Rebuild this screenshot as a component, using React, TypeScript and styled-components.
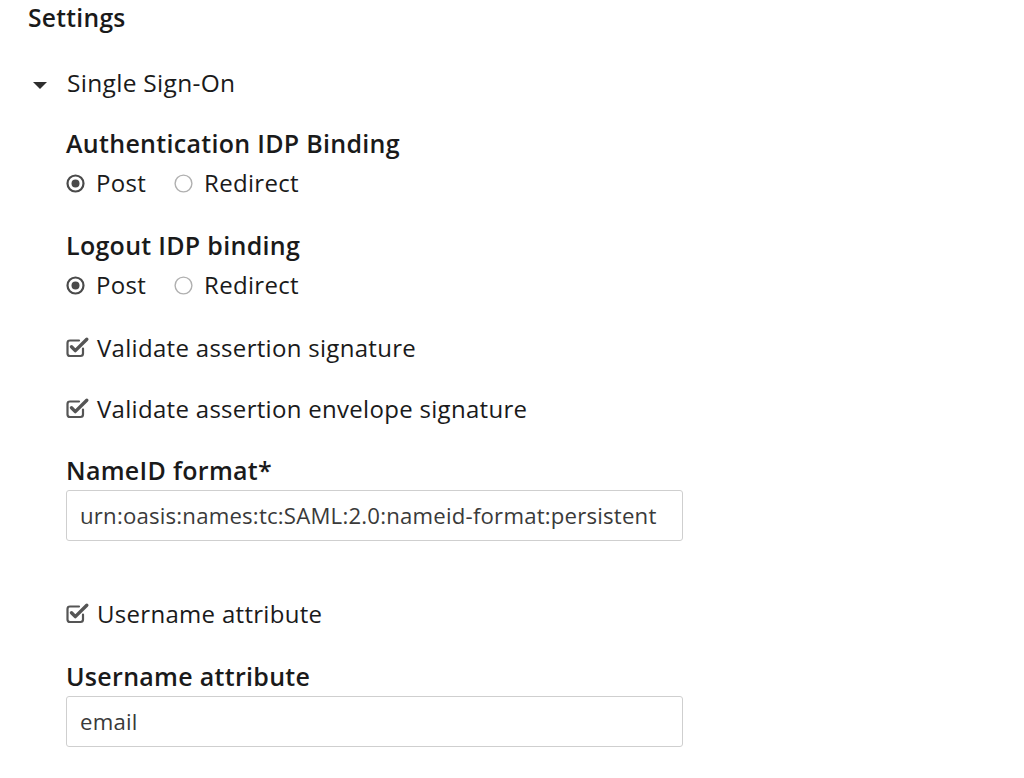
import React from "react";
import styled, { createGlobalStyle } from "styled-components";

const Global = createGlobalStyle`
  html, body { margin: 0; padding: 0; background: #ffffff; }
  body { font-family: "Open Sans", "Liberation Sans", sans-serif; color: #1a1a1a; }
`;

const Page = styled.div`
  display: flex;
  flex-direction: column;
  padding: 3px 0 0 28px;
`;

const Title = styled.div`
  font-size: 24.6px;
  font-weight: 600;
  line-height: 30px;
  letter-spacing: 0.3px;
`;

const Section = styled.div`
  display: flex;
  flex-direction: column;
  margin-top: 35px;
`;

const SectionHeader = styled.div`
  display: flex;
  align-items: center;
  height: 30px;
  font-size: 24.5px;
  line-height: 30px;
  letter-spacing: 0.3px;
`;

const Caret = styled.span`
  display: inline-block;
  width: 0;
  height: 0;
  border-left: 7px solid transparent;
  border-right: 7px solid transparent;
  border-top: 7px solid #2e2e2e;
  margin: 4px 20px 0 5px;
`;

const Body = styled.div`
  display: flex;
  flex-direction: column;
  padding-left: 38px;
  margin-top: 30px;
`;

const Group = styled.div<{ $gap?: number; $top?: number }>`
  display: flex;
  flex-direction: column;
  gap: ${(p) => p.$gap ?? 5}px;
  margin-top: ${(p) => p.$top ?? 0}px;
`;

const Label = styled.div`
  font-size: 25px;
  font-weight: 600;
  line-height: 30px;
  letter-spacing: 0.3px;
`;

const RadioRow = styled.div`
  display: flex;
  align-items: center;
  height: 30px;
  gap: 28px;
`;

const Option = styled.label`
  display: flex;
  align-items: center;
  gap: 11px;
  font-size: 24px;
  line-height: 30px;
  letter-spacing: 0.3px;
`;

const CheckRow = styled.label`
  display: flex;
  align-items: center;
  gap: 7px;
  height: 30px;
  font-size: 24px;
  letter-spacing: 0.3px;
`;

const Input = styled.div`
  box-sizing: border-box;
  width: 617px;
  height: 51px;
  border: 1px solid #cfcfcf;
  border-radius: 3px;
  display: flex;
  align-items: center;
  padding-left: 13px;
  font-size: 22.2px;
  color: #3a3a3a;
  letter-spacing: 0.2px;
`;

const RadioIcon = ({ checked }: { checked: boolean }) => (
  <svg width="19" height="19" viewBox="0 0 19 19">
    <circle
      cx="9.5"
      cy="9.5"
      r={checked ? 8 : 8.4}
      fill="none"
      stroke={checked ? "#4a4a4a" : "#b0b0b0"}
      strokeWidth={checked ? 2.2 : 1.4}
    />
    {checked && <circle cx="9.5" cy="9.5" r="4" fill="#4a4a4a" />}
  </svg>
);

const CheckIcon = () => (
  <svg width="24" height="22" viewBox="0 0 24 22">
    <path
      d="M17 12.5 V17.5 Q17 20 14.5 20 H4 Q1.5 20 1.5 17.5 V7 Q1.5 4.5 4 4.5 H13"
      fill="none"
      stroke="#555"
      strokeWidth="2.2"
      strokeLinecap="round"
    />
    <path
      d="M5.5 10.8 L9.3 14.6 L20.8 3.2"
      fill="none"
      stroke="#555"
      strokeWidth="3.4"
      strokeLinecap="round"
      strokeLinejoin="round"
    />
  </svg>
);

export default function App() {
  return (
    <>
      <Global />
      <Page>
        <Title>Settings</Title>
        <Section>
          <SectionHeader>
            <Caret />
            Single Sign-On
          </SectionHeader>
          <Body>
            <Group $gap={10}>
              <Label>Authentication IDP Binding</Label>
              <RadioRow>
                <Option>
                  <RadioIcon checked />
                  Post
                </Option>
                <Option>
                  <RadioIcon checked={false} />
                  Redirect
                </Option>
              </RadioRow>
            </Group>
            <Group $gap={10} $top={32}>
              <Label>Logout IDP binding</Label>
              <RadioRow>
                <Option>
                  <RadioIcon checked />
                  Post
                </Option>
                <Option>
                  <RadioIcon checked={false} />
                  Redirect
                </Option>
              </RadioRow>
            </Group>
            <Group $top={32}>
              <CheckRow>
                <CheckIcon />
                Validate assertion signature
              </CheckRow>
            </Group>
            <Group $top={31}>
              <CheckRow>
                <CheckIcon />
                Validate assertion envelope signature
              </CheckRow>
            </Group>
            <Group $top={32}>
              <Label>NameID format*</Label>
              <Input>urn:oasis:names:tc:SAML:2.0:nameid-format:persistent</Input>
            </Group>
            <Group $top={57}>
              <CheckRow>
                <CheckIcon />
                Username attribute
              </CheckRow>
            </Group>
            <Group $top={33}>
              <Label>Username attribute</Label>
              <Input>email</Input>
            </Group>
          </Body>
        </Section>
      </Page>
    </>
  );
}
